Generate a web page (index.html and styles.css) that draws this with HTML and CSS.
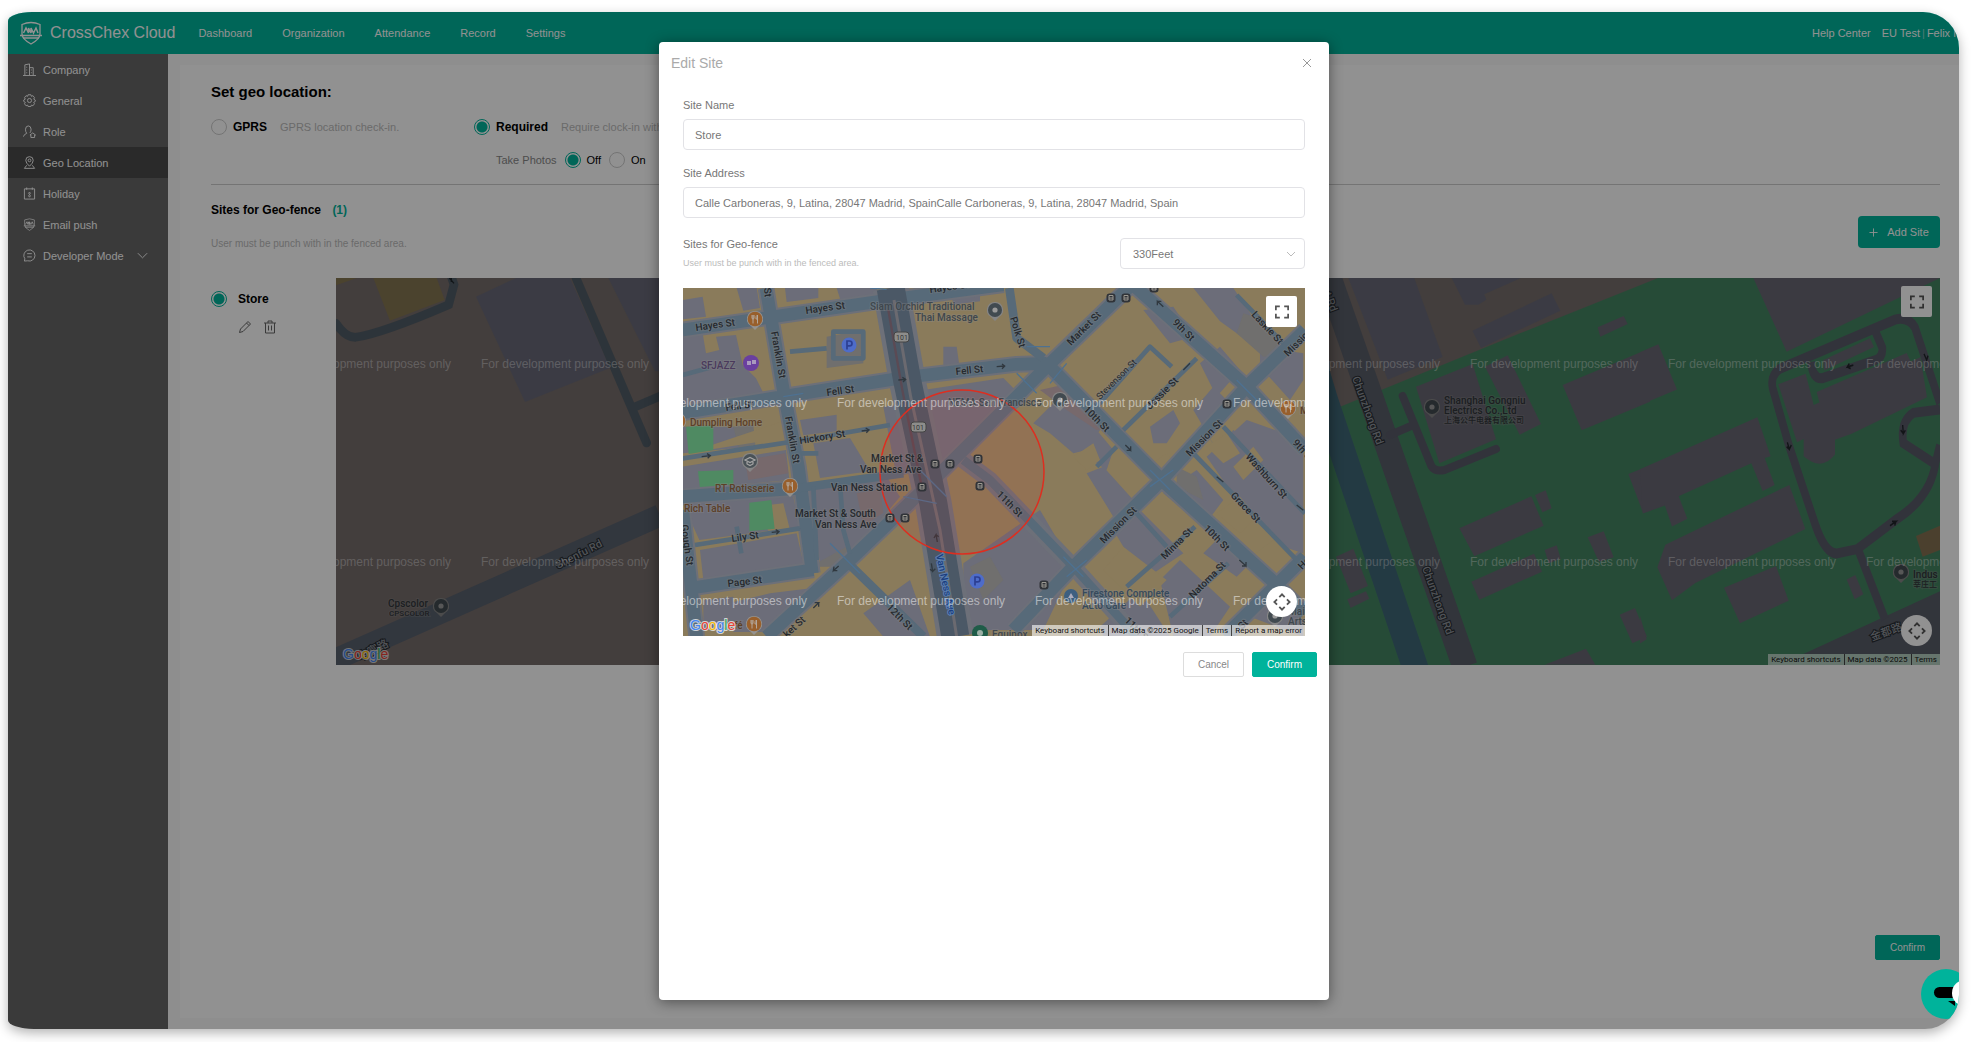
FILE: index.html
```html
<!DOCTYPE html>
<html lang="en">
<head>
<meta charset="utf-8">
<title>CrossChex Cloud</title>
<link rel="stylesheet" href="styles.css">
</head>
<body>
<svg class="defs" aria-hidden="true">
  <defs>
    <symbol id="i-shield" viewBox="0 0 22 24"><path d="M2 3.500Q11-.5 20 3.500V13q0 5-9 10-9-5-9-10Z" fill="none" stroke="currentColor" stroke-width="1.300"/><path d="M3.500 12 6 7l2.500 5V7L11 12V7l2.500 5L16 7l2 5M0 14.500h22M3 17h16" fill="none" stroke="currentColor" stroke-width="1.500"/></symbol>
    <symbol id="i-full" viewBox="0 0 16 16"><path d="M1 6V1.500h4.500M10.500 1.500H15V6M15 10v4.500h-4.500M5.500 14.500H1V10" fill="none" stroke="#555" stroke-width="2"/></symbol>
    <symbol id="i-pan" viewBox="0 0 20 20"><path d="m7 4.500 3-3 3 3M7 15.500l3 3 3-3M4.500 7l-3 3 3 3M15.500 7l3 3-3 3" fill="none" stroke="#555" stroke-width="2"/></symbol>
    <symbol id="m-food" viewBox="0 0 16 21"><path d="M8 0a8 8 0 0 1 4 15l-4 4-4-4A8 8 0 0 1 8 0Z" fill="#94928f"/><circle cx="8" cy="8" r="7.300" fill="#985f2c"/><path d="M5 4v3q0 1 1 1t1-1V4M6 4v8.500M10.500 12.500V4q-2 1-1.500 4h1.500" fill="none" stroke="#b3a79b" stroke-width="1"/></symbol>
    <symbol id="m-dot" viewBox="0 0 16 21"><path d="M8 0a8 8 0 0 1 4 15l-4 4-4-4A8 8 0 0 1 8 0Z" fill="#858585"/><circle cx="8" cy="8" r="7" fill="#414a50"/><circle cx="8" cy="8" r="2.600" fill="#9a9a9a"/></symbol>
    <symbol id="m-school" viewBox="0 0 16 21"><path d="M8 0a8 8 0 0 1 4 15l-4 4-4-4A8 8 0 0 1 8 0Z" fill="#858585"/><circle cx="8" cy="8" r="7" fill="#4a5257"/><path d="m3 7 5-2.500L13 7 8 9.500ZM5 9v2l3 1.500 3-1.500V9" fill="none" stroke="#a5a5a5" stroke-width="1.200"/></symbol>
    <symbol id="m-stop" viewBox="0 0 10 10"><rect x=".5" y=".5" width="9" height="9" rx="3" fill="#303338"/><path d="M3 2.500h4v4.500H3ZM3 5h4" fill="none" stroke="#9a9890" stroke-width="1"/></symbol>
    <symbol id="m-park" viewBox="0 0 16 16"><circle cx="8" cy="8" r="7.500" fill="#4e6cc9"/><path d="M6 12.500V4h2.500q2.500 0 2.500 2.400T8.500 8.800H6" fill="none" stroke="#2c3f93" stroke-width="1.700"/></symbol>
  </defs>
</svg>

<div class="window">
  <header class="topbar">
    <a class="brand" href="#"><svg class="logo" aria-hidden="true"><use href="#i-shield"/></svg>CrossChex Cloud</a>
    <nav class="topnav">
      <a href="#">Dashboard</a><a href="#">Organization</a><a href="#">Attendance</a><a href="#">Record</a><a href="#">Settings</a>
    </nav>
    <div class="account">
      <a class="help" href="#">Help Center</a><a href="#">EU Test</a><span class="bar">|</span><a href="#">Felix M</a>
    </div>
  </header>

  <div class="layout">
    <nav class="sidebar">
      <a href="#"><svg viewBox="0 0 14 14"><path d="M2 13V2l5-1v12M7 5h4v8M0 13.500h14M4 4v1M4 7v1M4 10v1M9 7v1M9 10v1"/></svg>Company</a>
      <a href="#"><svg viewBox="0 0 14 14"><path d="M5.500.8h3l.5 1.700 1.700-.7 1.700 2.200-.9 1.500 1.700 1v1.500l-1.700 1 .9 1.500-1.700 2.200-1.700-.7-.5 1.500h-3L5 12l-1.700.7-1.700-2.200.9-1.500-1.700-1V6.500l1.700-1-.9-1.500 1.700-2.200 1.700.7Z"/><circle cx="7" cy="7" r="2.200"/></svg>General</a>
      <a href="#"><svg viewBox="0 0 14 14"><path d="M.5 12.500Q1 10 4 9 2.500 7 2.700 4.500 3 1 5.700 1t3 3.500Q8.700 7 7.500 8.500M10.500 8.500l3 2.300h-1V13.500h-4v-2.700h-1Z"/></svg>Role</a>
      <a class="active" href="#" aria-current="page"><svg viewBox="0 0 14 14"><path d="M7 11Q3 7.500 3 4.700a4 4 0 0 1 8 0Q11 7.500 7 11ZM4 10l-2.500 3.300h11L10 10"/><circle cx="7" cy="4.700" r="1.500"/></svg>Geo Location</a>
      <a href="#"><svg viewBox="0 0 14 14"><path d="M1.500 2h11v11h-11ZM4 .5V3M10 .5V3M7 5.500q2 1 0 2.500-2 1.500 0 3 2-1.500 0-3-2-1.500 0-2.500"/></svg>Holiday</a>
      <a href="#"><svg viewBox="0 0 22 24"><use href="#i-shield"/></svg>Email push</a>
      <a href="#"><svg viewBox="0 0 14 14"><path d="M1.500 13 2 10.500A6 6 0 1 1 5 12.700ZM4.500 5h5M4.500 8.500h5"/></svg>Developer Mode<svg class="caret" viewBox="0 0 14 14"><path d="m2 4.500 5 5 5-5"/></svg></a>
    </nav>

    <main class="main">
      <section class="card">
        <h1>Set geo location:</h1>
        <div class="modes">
          <div class="row">
            <label class="choice"><input type="radio" name="mode"><b>GPRS</b></label>
            <span class="hint">GPRS location check-in.</span>
          </div>
          <div class="mode-required">
            <div class="row">
              <label class="choice"><input type="radio" name="mode" checked><b>Required</b></label>
              <span class="hint">Require clock-in within the fenced area.</span>
            </div>
            <div class="photos">
              <span class="photos-label">Take Photos</span>
              <label class="choice"><input type="radio" name="photos" checked><span>Off</span></label>
              <label class="choice"><input type="radio" name="photos"><span>On</span></label>
            </div>
          </div>
        </div>
        <hr>
        <div class="sites-head">
          <div>
            <h2>Sites for Geo-fence <span class="count">(1)</span></h2>
            <p class="note">User must be punch with in the fenced area.</p>
          </div>
          <button class="add" type="button"><svg viewBox="0 0 10 10"><path d="M5 .5v9M.5 5h9" stroke="currentColor" fill="none"/></svg>Add Site</button>
        </div>
        <div class="site">
          <div class="site-info">
            <label class="choice store"><input type="radio" name="site" checked><b>Store</b></label>
            <div class="site-tools">
              <button type="button" aria-label="Edit"><svg viewBox="0 0 14 14"><path d="m1.500 12.500 1-3.500 7.500-7.500 2.500 2.500L5 11.500ZM8.500 3 11 5.500"/></svg></button>
              <button type="button" aria-label="Delete"><svg viewBox="0 0 14 14"><path d="M2.500 3v10h9V3M1 3h12M5 3V1h4v2M5.500 5.500v5M8.500 5.500v5"/></svg></button>
            </div>
          </div>
          <div class="map map-wide">
            <svg class="tiles" viewBox="336 278 1604 387" preserveAspectRatio="xMinYMin slice" role="img" aria-label="Map of the site">
              <rect x="336" y="278" width="1604" height="387" fill="#766d6b"/>
              <g transform="translate(200 190) scale(.333333)">
                <path d="M408 264h62l-62 22ZM520 264h190l24 66-164 62Z" fill="#857652"/>
                <path d="m828 320 120-56h162l120 270-255 102ZM1225 264h260v280h-120Z" fill="#66687a" fill-opacity=".85"/>
                <path d="M408 400q28 42 58 42 80-12 280-98l16-60-8-24M1128 264l212 495M1306 650l200-85" fill="none" stroke="#505c66" stroke-width="26" stroke-linecap="round"/>
                <path d="m380 1420 1000-444" stroke="#58616e" stroke-width="66"/>
                <path d="m748 264 14 16m-8-16v12" stroke="#1e262b" stroke-width="4"/>
              </g>
              <g transform="translate(1320 200) scale(.333333)">
                <path d="m0 645 600-245 390-156 960-400v1600H0Z" fill="#448562"/>
                <path d="m85 234 195-8 88 245-165 68ZM395 234l40 80 40 0 24-15-6-16 110-49ZM457 392l238-112 26 52-238 112Z" fill="#66687a" fill-opacity=".85"/>
                <path d="m-15 500 30 100 280 830" fill="none" stroke="#3f6677" stroke-width="78"/>
                <path d="m15 200 420 1200" fill="none" stroke="#585d68" stroke-width="76"/>
                <path d="m248 588 86 210q10 18 40 12l154-63M210 705l70-30" fill="none" stroke="#585b68" stroke-width="24" stroke-linecap="round"/>
                <path d="m288 560 170-68 70 226-170 72ZM495 500l68-34 100 206-64 32ZM833 382l78-34 12 24-82 38ZM728 555l262-110v160l-205 86ZM418 985l216-96 37 88-208 92ZM645 885l32-14 18 54-28 12ZM925 822l150-60v140l-105 38ZM803 1012l48-18 30 78-44 14ZM674 1050l36-14 12 40-36 14ZM454 1145l188-84 24 54-188 84ZM899 1244l46-20 36 86-44 20ZM674 1394l124-48 28 48ZM48 1070l52-24 44 112-52 22ZM82 1198l56-24 10 22-56 28Z" fill="#686672"/>
              </g>
              <g transform="translate(1640 0) scale(.333333 .4337)">
                <path d="m0 812 55-18 56 104-111 36ZM0 1082l352-120 40 90-18 4 30 62-36 14-34-64-218 76 26 52-46 18-22-50-66 20ZM76 1256l372-138 48 102-330 124-70 40-44-76ZM252 1355l156-50 38 80-146 52ZM620 1336l26-10 24 44-26 12ZM0 1420l20 54-20 10ZM340 641h560l-460 170Z" fill="#686672"/>
                <path d="m415 886 82-24 24 72 320-110 20 92-226 84-50 14v34q-40 40-94 4v-40l-20 8ZM550 830l140-50 12 20-150 54ZM530 904l270-90 60 96-300 80Z" fill="#686672"/>
                <path d="m490 1508 410-145v145Z" fill="#585d68"/>
                <path d="M900 930 825 755q-20-26-60-18L420 850q-30 16-22 45l48 130 80 185q30 68 66 66l60-10 120-70q100-50 115-130l13-40M900 944l-80 8q-40 20-30 70l100 50M705 762l22 40q2 22-20 28l-160 42q-30 2-34-38M655 1268l80 160" fill="none" stroke="#585b68" stroke-width="23"/>
                <path d="m828 1236 72-24v56l-52 16Z" fill="#857152"/>
                <path d="m640 842-18 4 6-8m-6 8 10 4M442 1020l6 16 6-10m-6 10-8-6M788 980l2 20 6-8m-6 8-8-8M750 1212l18-10-12 0m12 0-4 10M852 816l8 14 4-10" stroke="#20242a" stroke-width="4" fill="none"/>
              </g>
              <use href="#m-dot" x="433" y="598" width="16" height="21"/>
              <use href="#m-dot" x="1424" y="399" width="16" height="21"/>
              <use href="#m-dot" x="1893" y="564" width="16" height="21"/>
              <g class="place dark">
                <text x="388" y="607">Cpscolor</text><text class="tiny" x="389" y="616">CPSCOLOR</text>
                <text x="1444" y="404">Shanghai Gongniu</text><text x="1444" y="414">Electrics Co.,Ltd</text><text class="tiny" x="1444" y="423">上海公牛电器有限公司</text>
                <text x="1913" y="578">Indus</text><text class="tiny" x="1913" y="587">莘庄工</text>
              </g>
              <g class="road dark">
                <text transform="translate(558 569) rotate(-27)">Shenfu Rd</text>
                <text transform="translate(360 661) rotate(-27)">申富路</text>
                <text transform="translate(1352 378) rotate(70)">Chunzhong Rd</text>
                <text transform="translate(1422 568) rotate(70)">Chunzhong Rd</text>
                <text transform="translate(1324 294) rotate(70)">t Rd</text>
                <text transform="translate(1872 641) rotate(-20)">金都路</text>
              </g>
              <g class="watermark">
                <text x="367" y="368">For development purposes only</text><text x="565" y="368">For development purposes only</text><text x="1356" y="368">For development purposes only</text><text x="1554" y="368">For development purposes only</text><text x="1752" y="368">For development purposes only</text><text x="1950" y="368">For development purposes only</text>
                <text x="367" y="566">For development purposes only</text><text x="565" y="566">For development purposes only</text><text x="1356" y="566">For development purposes only</text><text x="1554" y="566">For development purposes only</text><text x="1752" y="566">For development purposes only</text><text x="1950" y="566">For development purposes only</text>
              </g>
              <text class="google" x="343" y="659"><tspan fill="#4285f4">G</tspan><tspan fill="#ea4335">o</tspan><tspan fill="#fbbc05">o</tspan><tspan fill="#4285f4">g</tspan><tspan fill="#34a853">l</tspan><tspan fill="#ea4335">e</tspan></text>
            </svg>
            <button class="ctl full" type="button" aria-label="Toggle fullscreen view"><svg><use href="#i-full"/></svg></button>
            <button class="ctl pan" type="button" aria-label="Map camera controls"><svg><use href="#i-pan"/></svg></button>
            <div class="credit"><span>Keyboard shortcuts</span><span>Map data ©2025</span><a href="#">Terms</a></div>
          </div>
        </div>
        <button class="btn primary save" type="button">Confirm</button>
      </section>
    </main>
  </div>

  <div class="backdrop">
    <div class="dialog" role="dialog" aria-labelledby="dlg-title">
      <div class="dialog-head">
        <h2 id="dlg-title">Edit Site</h2>
        <button class="close" type="button" aria-label="Close"><svg viewBox="0 0 10 10"><path d="m1 1 8 8M9 1 1 9" stroke="currentColor" fill="none"/></svg></button>
      </div>
      <form class="form">
        <label for="site-name">Site Name</label>
        <input id="site-name" type="text" value="Store">
        <label for="site-address">Site Address</label>
        <input id="site-address" type="text" value="Calle Carboneras, 9, Latina, 28047 Madrid, SpainCalle Carboneras, 9, Latina, 28047 Madrid, Spain">
        <div class="fence">
          <div><label for="radius">Sites for Geo-fence</label><p class="note">User must be punch with in the fenced area.</p></div>
          <div class="select"><select id="radius"><option>330Feet</option></select><svg viewBox="0 0 10 10"><path d="m1 3 4 4 4-4" stroke="#bbb" fill="none"/></svg></div>
        </div>
        <div class="map map-edit">
          <svg class="tiles" viewBox="683 288 622 348" preserveAspectRatio="xMinYMin slice" role="img" aria-label="Map with a circular geo-fence">
            <rect x="683" y="288" width="622" height="348" fill="#8a7b5b"/>
            <g transform="translate(670 280) scale(.333333)">
              <g fill="#6c6d79">
                <path d="M38 160h60l10 60 40-10-10-40 60-5 20 90 40 40 30 60-80 15-170 30ZM38 60l60-10 10 60-70 8ZM200 24h60l10 60-50 8ZM38 440h200v60l-200 20ZM130 440h50v60h-50ZM38 560l310-50 10 90-320 30ZM38 670l330-30 20 100-300 40ZM90 810l290-50 20 90-300 50ZM345 24h100v30l-95 12ZM500 24h120l4 30-110 14ZM390 420l110-16v50l-100 12ZM430 490l110-16 60 100-150 20ZM410 620l240-30 40 60-150 180-90 20ZM640 380l60-8 40 200-60 20ZM760 330l240-36 70 70-280 200ZM840 24h90v40l-80 10ZM820 200h40l10 70-50 8ZM300 940l110-14-10 50-90 80h-120v-90ZM100 960l90-10v100h-90Z"/>
                <path d="M580 1000 720 900l60 170H640ZM880 850l230-160 100 170-90 190H880ZM1000 830l80-80 110 120-100 120Z"/>
                <path d="m1090 430 60-60 80 10 60 70-40 60-40 10-70-60ZM1210 480l70-30 50 60-20 60-60-40ZM1250 580l50-20 90 100-60 50ZM1440 440l70-50 20 40-40 60h-40ZM1420 90l90-10 60 90-70 20ZM1570 24h120l60 90-30 60-70-50ZM1590 250l60-50 60 70-70 80ZM1570 390l60-70 50 50-70 90 30 50 50-60 40 30-60 80ZM1330 750l80-60 130 130-120 80ZM1480 640l100-70 80 90-60 80ZM1770 200l130 20v80l-40 60-90-100ZM1730 420l170 60v340l-60-20-140-140-90-130ZM1470 900l60-60 150 140-60 90h-110ZM1290 1040l120-110 90 140h-200ZM1600 820l70-70 90 80-60 60ZM1740 1010l60-50 100 60v50Z"/>
              </g>
              <g fill="#77696c"><path d="m225 540 120-20 10 60-120 20ZM720 400l60-8 10 130-50 20ZM1110 330l90-20 140 130-60 10-90-60ZM560 640l70-12 10 70-60 40Z"/></g>
              <g fill="#706f6e"><path d="m190 440 60-6 6 60-50 10ZM470 170l110-20v100l-110 14ZM1720 100l60 20 90 100-90 10-80-70ZM1520 560l60 30 20 70-80-40ZM420 860l110-60 30 60ZM900 860l60-30 40 70-60 60Z"/></g>
              <g fill="#8a7b5b"><path d="m110 500 240-80 16 50-240 38ZM250 680l90-10 20 80-60 10ZM260 470l80-8 12 30-90 14ZM1210 530l60-40 20 50-40 30ZM1430 560l60-40 30 40-50 60ZM1610 500l60-40 40 60-50 30ZM1690 560l60-60 30 40-60 60ZM1640 700l70-50 50 60-50 50ZM1730 840l80-60 60 60-60 60ZM1300 870l60-70 130 100-80 80Z"/></g>
              <g fill="#4f8a62"><path d="m48 440 82-4v74l-74 12ZM84 574l106-4v50l-100 6ZM238 668l66-8 10 86-76 8Z"/></g>
              <g fill="none" stroke="#6d7079" stroke-linejoin="round">
                <path stroke-width="50" d="M38 150 640 62 1000 14M38 398 380 343l320-50 340-40 90-3M288 24l52 306 45 230 42 320M38 650l342-25M38 690l42 380M60 925l370-56M290 1070l250-230 240-230 350-350 290-280M1130 250l345 350 330 300 100 100M1400 24l330 296 175 190M1905 150l-175 170-255 280-265 260-180 190M880 540l80 60 250 260 190 210M1905 830l-240 238"/>
                <path stroke-width="110" d="m662 24 50 280 78 366 66 400"/>
              </g>
              <g fill="none" stroke="#576a79" stroke-linejoin="round">
                <path stroke-width="38" d="M38 150 640 62 1000 14M38 398 380 343l320-50 340-40 90-3M288 24l52 306 45 230 42 320M38 650l342-25M38 690l42 380M60 925l370-56M290 1070l250-230 240-230 350-350 290-280M1130 250l345 350 330 300 100 100M1400 24l330 296 175 190M1905 150l-175 170-255 280-265 260-180 190M1905 830l-240 238"/>
                <path stroke-width="26" d="m380 625 320-45M545 860l215 210M1018 24l22 150 80 60M880 540l80 60 250 260 190 210"/>
                <path stroke-width="14" d="m38 535 362-55 260-45M75 795l315-50M38 285l80-22M1360 450l220-215M1280 380l160-180 65 60M1660 440l245 260M1570 520l320 330M1370 920l205-180M1500 1010l175-160M1400 700l90 100M1700 45l140 145M430 620l10 220M510 610l10 140 20 70M200 740l14 80M395 520h50M490 155h90v80h-90ZM1280 560l60-60M360 215l110-10"/>
              </g>
              <g fill="none">
                <path stroke="#4b5866" stroke-width="84" d="m662 24 50 280 78 366 66 400"/>
                <path stroke="#6b6a70" stroke-width="9" d="m672 60 50 290 88 400 50 320"/>
                <path stroke="#5b4a54" stroke-width="7" d="m655 90 42 240 60 300"/>
                <path stroke="#4e7191" stroke-width="4" d="m600 24 50 4M340 350l60-10M1040 280l60 60M1070 200l70 0M1190 250l-50 60M1440 570l60 60M1440 620l70-50M1700 300l60 60M1180 830l60 60M1190 890l60-50M480 790l90 90M740 560l90 90M700 650l100 20"/>
                <path stroke="#30383f" stroke-width="4" d="m95 530 26-3m-10-6 10 6-8 8M575 453l22-3m-10-6 10 6-8 8M685 300l22-2m-10-6 10 6-8 8M305 757l22-2m-10-6 10 6-8 8M430 984l16-16h-12m12 0v12M506 858l-16 14 2-12m-2 12h12M980 260l24-2m-8-6 8 6-8 8M1366 495l16 16v-12m0 12h-12M1708 840l20 18v-12m0 12h-12M1480 80l-18-16v12m0-12h12M1640 590l20 16M1880 675l20 16M1540 270l20-20M784 850l4 24 8-8m-8 8-8-6M802 786l-4-22-6 10m6-10 8 6"/>
              </g>
            </g>
            <use href="#m-food" x="747" y="311" width="16" height="21"/>
            <use href="#m-food" x="782" y="478" width="16" height="21"/>
            <use href="#m-food" x="746" y="616" width="16" height="21"/>
            <use href="#m-food" x="670" y="413" width="16" height="21"/>
            <use href="#m-food" x="1280" y="400" width="16" height="21"/>
            <use href="#m-dot" x="987" y="302" width="16" height="21"/>
            <use href="#m-school" x="742" y="453" width="16" height="21"/>
            <use href="#m-dot" x="1052" y="392" width="16" height="21"/>
            <use href="#m-dot" x="1267" y="608" width="16" height="21"/>
            <circle cx="751" cy="363" r="8" fill="#6a3fa0"/><path d="M747 361h4v4h-4zM752 360h4v4h-4z" fill="#a999bd"/>
            <circle cx="1071" cy="596" r="7" fill="#3d5f80"/><path d="m1068 598 3-5 3 5z" fill="#aab"/>
            <circle cx="980" cy="633" r="8" fill="#1f5c48"/><circle cx="980" cy="633" r="3" fill="#9cb0a6"/>
            <use href="#m-park" x="841" y="337" width="16" height="16"/><use href="#m-park" x="969" y="573" width="16" height="16"/>
            <circle cx="962" cy="472" r="82" fill="#e02a1a" fill-opacity=".1" stroke="#dd2e20" stroke-width="1.500"/>
            <use href="#m-stop" x="930" y="459" width="10" height="10"/><use href="#m-stop" x="945" y="459" width="10" height="10"/><use href="#m-stop" x="973" y="454" width="10" height="10"/><use href="#m-stop" x="975" y="481" width="10" height="10"/><use href="#m-stop" x="917" y="482" width="10" height="10"/><use href="#m-stop" x="885" y="513" width="10" height="10"/><use href="#m-stop" x="900" y="513" width="10" height="10"/><use href="#m-stop" x="1106" y="293" width="10" height="10"/><use href="#m-stop" x="1121" y="293" width="10" height="10"/><use href="#m-stop" x="1222" y="399" width="10" height="10"/><use href="#m-stop" x="1039" y="580" width="10" height="10"/><use href="#m-stop" x="1149" y="283" width="10" height="10"/>
            <g class="shield"><rect x="894" y="332" width="15" height="10" rx="3"/><rect x="911" y="422" width="15" height="10" rx="3"/><text x="902" y="340">101</text><text x="918" y="430">101</text></g>
            <g class="road">
              <text transform="translate(696 331) rotate(-8)">Hayes St</text><text transform="translate(806 314) rotate(-8)">Hayes St</text><text transform="translate(930 293) rotate(-8)">Hayes St</text>
              <text transform="translate(771 332) rotate(80)">Franklin St</text><text transform="translate(785 417) rotate(80)">Franklin St</text><text transform="translate(764 288) rotate(85)">St</text>
              <text transform="translate(827 396) rotate(-8)">Fell St</text><text transform="translate(956 375) rotate(-6)">Fell St</text><text transform="translate(726 411) rotate(-8)">Fell St</text>
              <text transform="translate(800 444) rotate(-9)">Hickory St</text><text transform="translate(732 542) rotate(-8)">Lily St</text><text transform="translate(728 587) rotate(-7)">Page St</text>
              <text transform="translate(681 525) rotate(82)">Gough St</text><text transform="translate(886 608) rotate(45)">12th St</text><text transform="translate(787 638) rotate(-42)">ket St</text>
              <text transform="translate(1010 318) rotate(73)">Polk St</text><text transform="translate(1071 346) rotate(-45)">Market St</text><text transform="translate(1172 323) rotate(45)">9th St</text>
              <text transform="translate(1083 410) rotate(45)">10th St</text><text transform="translate(1203 529) rotate(45)">10th St</text><text transform="translate(996 495) rotate(45)">11th St</text><text transform="translate(1124 621) rotate(45)">11th St</text>
              <text transform="translate(1190 457) rotate(-45)">Mission St</text><text transform="translate(1104 544) rotate(-45)">Mission St</text><text transform="translate(1288 357) rotate(-45)">Mission St</text>
              <text transform="translate(1150 410) rotate(-45)">Jessie St</text><text class="thin" transform="translate(1100 400) rotate(-45)">Stevenson St</text><text transform="translate(1251 315) rotate(47)">Laskie St</text>
              <text transform="translate(1245 457) rotate(48)">Washburn St</text><text transform="translate(1230 496) rotate(46)">Grace St</text><text transform="translate(1165 560) rotate(-45)">Minna St</text><text transform="translate(1193 599) rotate(-45)">Natoma St</text>
              <text transform="translate(1292 443) rotate(48)">9th St</text><text transform="translate(1302 570) rotate(-45)">Howard St</text><text transform="translate(1242 630) rotate(-45)">St</text>
              <text class="blue" transform="translate(936 555) rotate(78)">Van Ness Ave</text>
              <text x="871" y="462">Market St &amp;</text><text x="860" y="473">Van Ness Ave</text><text x="831" y="491">Van Ness Station</text><text x="795" y="517">Market St &amp; South</text><text x="815" y="528">Van Ness Ave</text>
            </g>
            <g class="place">
              <text x="870" y="310">Siam Orchid Traditional</text><text x="915" y="321">Thai Massage</text><text x="948" y="406">NEMA San Francisco</text>
              <text x="992" y="638">Equinox</text><text x="1288" y="615">Main</text><text x="1288" y="625">Arts</text>
              <g class="brown"><text x="690" y="426">Dumpling Home</text><text x="715" y="492">RT Rotisserie</text><text x="684" y="512">Rich Table</text><text x="722" y="629">Café</text><text x="1300" y="414">M</text></g>
              <text class="violet" x="701" y="369">SFJAZZ</text>
              <g class="slate"><text x="1082" y="597">Firestone Complete</text><text x="1082" y="609">Auto Care</text></g>
            </g>
            <g class="watermark bright">
              <text x="723" y="407">For development purposes only</text><text x="921" y="407">For development purposes only</text><text x="1119" y="407">For development purposes only</text><text x="1317" y="407">For development purposes only</text>
              <text x="723" y="605">For development purposes only</text><text x="921" y="605">For development purposes only</text><text x="1119" y="605">For development purposes only</text><text x="1317" y="605">For development purposes only</text>
            </g>
            <text class="google" x="690" y="630"><tspan fill="#4285f4">G</tspan><tspan fill="#ea4335">o</tspan><tspan fill="#fbbc05">o</tspan><tspan fill="#4285f4">g</tspan><tspan fill="#34a853">l</tspan><tspan fill="#ea4335">e</tspan></text>
          </svg>
          <button class="ctl full" type="button" aria-label="Toggle fullscreen view"><svg><use href="#i-full"/></svg></button>
          <button class="ctl pan" type="button" aria-label="Map camera controls"><svg><use href="#i-pan"/></svg></button>
          <div class="credit"><span>Keyboard shortcuts</span><span>Map data ©2025 Google</span><a href="#">Terms</a><a href="#">Report a map error</a></div>
        </div>
      </form>
      <div class="actions"><button class="btn" type="button">Cancel</button><button class="btn primary" type="button">Confirm</button></div>
    </div>
  </div>

  <button class="chat" type="button" aria-label="Chat">
    <svg viewBox="0 0 50 50"><rect x="13" y="18" width="24" height="11" rx="5.500"/><path d="M27 32h7v5Z"/><circle cx="44" cy="24" r="13" fill="#fff"/></svg>
  </button>
</div>
</body>
</html>
```
FILE: styles.css
```css
* { box-sizing: border-box; }
body { margin: 0; background: #fff; overflow: hidden; font: 11px/16px "Liberation Sans", "Noto Sans CJK SC", sans-serif; color: #666; }
h1, h2, p { margin: 0; }
a { color: inherit; text-decoration: none; }
button, input, select { font: inherit; margin: 0; }
button { border: 0; padding: 0; background: none; cursor: pointer; }
.defs { position: absolute; width: 0; height: 0; }

.window { position: relative; display: flex; flex-direction: column; min-height: calc(100vh - 25px); margin: 12px 23px 13px 8px; overflow: hidden; border-radius: 24px 36px 34px 26px / 9px 36px 34px 9px; box-shadow: 0 4px 12px rgba(0, 0, 0, .3); background: #fafafa; }

.topbar { display: flex; align-items: center; height: 42px; padding-left: 12px; background: #00b39b; color: #fff; white-space: nowrap; }
.brand { display: flex; align-items: center; gap: 8px; font-size: 16px; }
.logo { width: 22px; height: 24px; }
.topnav { display: flex; gap: 30px; margin-left: 23px; }
.account { display: flex; width: 147px; margin-left: auto; overflow: hidden; }
.help { margin-right: 11px; }
.bar { margin: 0 2px; opacity: .5; }

.layout { display: flex; flex: 1; }
.sidebar { flex: 0 0 160px; background: #666; color: #fff; }
.sidebar a { display: flex; align-items: center; gap: 7px; height: 31px; padding-left: 15px; }
.sidebar svg { width: 13px; height: 13px; fill: none; stroke: currentColor; stroke-width: 1; }
.sidebar .active { background: #4b4b4b; }
.sidebar .caret { margin-left: 5px; }

.main { flex: 1; display: flex; min-width: 0; padding: 11px 0 11px 12px; }
.card { flex: 1; display: flex; flex-direction: column; min-width: 0; padding: 17px 19px 58px 31px; background: #fff; }
.card h1 { font-size: 15px; line-height: 20px; color: #000; }
.card h2 { font-size: 12px; color: #000; }
.modes { display: grid; grid-template-columns: 263px 1fr; align-items: start; margin-top: 17px; }
.row { display: flex; align-items: center; gap: 13px; }
.choice { display: flex; align-items: center; gap: 6px; color: #000; }
.choice b { font-size: 12px; }
.choice input { appearance: none; width: 16px; height: 16px; border: 1px solid #ccc; border-radius: 50%; }
.choice input:checked { border-color: #00b39b; background: radial-gradient(circle, #00b39b 5px, transparent 6px); }
.hint, .note { color: #bbb; }
.photos { display: flex; gap: 8px; margin-top: 17px; padding-left: 22px; }
.photos-label { color: #888; }
hr { width: 100%; height: 1px; margin: 16px 0 0; border: 0; background: #ccc; }
.sites-head { display: flex; align-items: flex-end; justify-content: space-between; padding-top: 17px; }
.count { margin-left: 8px; color: #00b39b; }
.note { font-size: 10px; }
.sites-head .note { margin-top: 18px; }
.add { display: flex; align-items: center; justify-content: center; gap: 9px; width: 82px; height: 32px; margin-bottom: 4px; border-radius: 4px; background: #00b39b; color: #fff; }
.add svg { width: 9px; height: 9px; }
.site { display: flex; margin-top: 26px; }
.site-info { flex: 0 0 125px; padding-top: 13px; }
.store { gap: 11px; }
.site-tools { display: flex; gap: 11px; padding: 13px 0 0 27px; }
.site-tools svg { display: block; width: 14px; height: 14px; fill: none; stroke: #666; stroke-width: 1; }
.site-tools button { width: 14px; height: 14px; }

.map { position: relative; flex: 1; min-width: 0; overflow: hidden; }
.map-wide { height: 387px; }
.tiles { display: block; width: 100%; height: 100%; }
.ctl { position: absolute; right: 8px; display: flex; align-items: center; justify-content: center; width: 31px; height: 31px; background: #fff; }
.full { top: 8px; border-radius: 2px; }
.full svg { width: 14px; height: 14px; }
.pan { bottom: 19px; border-radius: 50%; }
.pan svg { width: 18px; height: 18px; }
.credit { position: absolute; right: 0; bottom: 0; display: flex; font: 8px/11px Roboto, sans-serif; color: #111; background: rgba(255, 255, 255, .6); }
.credit > * { padding: 0 3px; }
.credit > * + * { border-left: 1px solid #444; }

.tiles text { font-family: Roboto, "Noto Sans CJK SC", sans-serif; font-size: 10px; }
.road text { font-weight: 500; fill: #26292d; stroke: rgba(130, 130, 130, .35); stroke-width: 2px; paint-order: stroke; }
.road .thin { font-weight: 400; font-size: 9px; }
.road .blue { fill: #1b3f80; stroke: #5d80b0; }
.road.dark text { fill: #8d9299; stroke: #272c32; font-size: 11px; }
.place text { font-weight: 500; fill: #3f474d; stroke: rgba(140, 140, 140, .3); stroke-width: 2px; paint-order: stroke; }
.place.dark text { fill: #32363b; stroke: rgba(140, 140, 140, .35); }
.place .tiny { font-size: 8px; }
.place .brown text { fill: #5c4028; }
.place .violet { fill: #4a3a5c; }
.place .slate text { fill: #35495c; }
.shield rect { fill: #8d8d8b; stroke: #444; stroke-width: 1; }
.shield text { font-size: 7px; fill: #333; text-anchor: middle; }
.tiles .watermark text { font-family: "Liberation Sans", sans-serif; font-size: 12px; fill: #fff; fill-opacity: .42; text-anchor: middle; }
.tiles .bright text { fill-opacity: .5; }
.tiles .google { font-family: "Liberation Sans", sans-serif; font-size: 14px; stroke: #fff; stroke-opacity: .7; stroke-width: 2px; paint-order: stroke; }

.btn { min-width: 61px; height: 25px; border: 1px solid #ddd; border-radius: 2px; background: #fff; color: #888; font-size: 10px; }
.primary { min-width: 65px; border-color: #00b39b; background: #00b39b; color: #fff; }
.save { align-self: flex-end; margin-top: auto; }

.backdrop { position: absolute; inset: 0; display: flex; justify-content: center; padding: 30px 0 29px 21px; background: rgba(0, 0, 0, .43); }
.dialog { width: 670px; max-width: 100%; border-radius: 4px; background: #fff; box-shadow: 0 2px 14px rgba(0, 0, 0, .45); }
.dialog-head { display: flex; align-items: center; justify-content: space-between; padding: 13px 17px 0 12px; }
.dialog-head h2 { font-size: 14px; font-weight: 400; color: #aaa; }
.close { width: 10px; height: 10px; color: #999; }
.close svg { display: block; width: 10px; height: 10px; }
.form { display: flex; flex-direction: column; padding: 26px 24px 0; }
.form label { line-height: 16px; color: #777; }
.form input { height: 31px; margin: 6px 0 15px; padding: 0 11px; border: 1px solid #e2e2e6; border-radius: 4px; background: #fff; color: #777; }
.fence { display: flex; justify-content: space-between; align-items: center; margin-top: 3px; }
.fence .note { margin-top: 3px; font-size: 9px; }
.select { display: grid; width: 185px; }
.select select { grid-area: 1 / 1; appearance: none; height: 31px; padding: 0 12px; border: 1px solid #e2e2e6; border-radius: 4px; background: #fff; color: #777; }
.select svg { grid-area: 1 / 1; place-self: center end; width: 10px; height: 10px; margin-right: 9px; pointer-events: none; }
.map-edit { flex: none; height: 348px; margin-top: 17px; }
.actions { display: flex; justify-content: flex-end; gap: 8px; padding: 16px 12px 0 0; }

.chat { position: absolute; right: -12px; bottom: 10px; width: 50px; height: 50px; border-radius: 50%; background: #00b39b; overflow: hidden; }
.chat svg { display: block; width: 50px; height: 50px; }
```
